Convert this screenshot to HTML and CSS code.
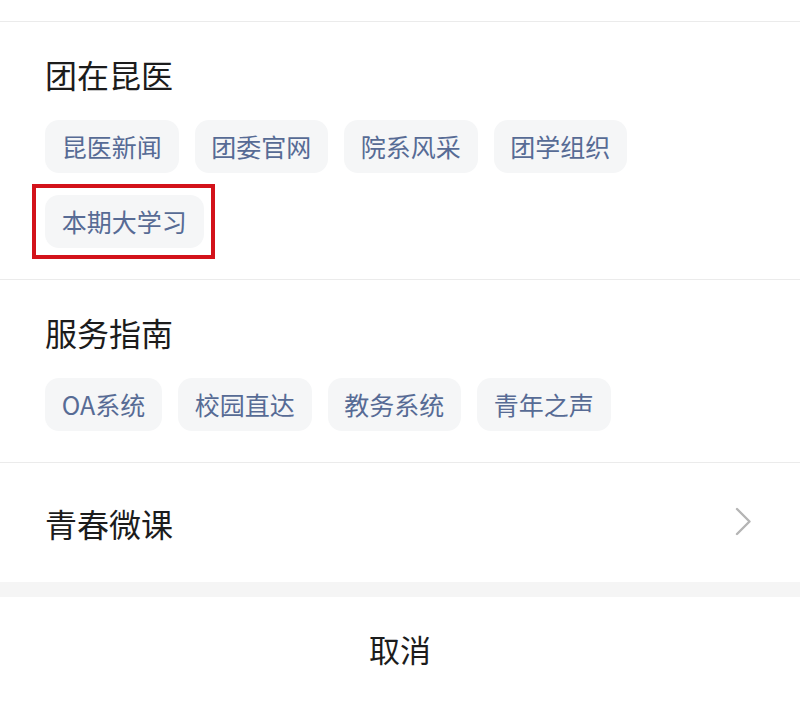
FILE: index.html
```html
<!DOCTYPE html>
<html lang="zh-CN">
<head>
<meta charset="utf-8">
<title>菜单</title>
<link rel="stylesheet" href="styles.css">
</head>
<body>
<div class="sheet">
  <div class="top-gap"></div>
  <section class="group">
    <h2 class="group-title">团在昆医</h2>
    <div class="tags">
      <span class="tag">昆医新闻</span>
      <span class="tag">团委官网</span>
      <span class="tag">院系风采</span>
      <span class="tag">团学组织</span>
      <span class="tag tag-marked">本期大学习</span>
    </div>
  </section>
  <section class="group">
    <h2 class="group-title">服务指南</h2>
    <div class="tags">
      <span class="tag">OA系统</span>
      <span class="tag">校园直达</span>
      <span class="tag">教务系统</span>
      <span class="tag">青年之声</span>
    </div>
  </section>
  <div class="link-row">
    <span class="group-title">青春微课</span>
    <svg class="chevron" width="17" height="29" viewBox="0 0 17 29" aria-hidden="true">
      <polyline points="2,2 14.5,14.5 2,27" fill="none" stroke="#b5b5b5" stroke-width="2.4" stroke-linecap="round" stroke-linejoin="round"/>
    </svg>
  </div>
  <div class="band"></div>
  <div class="cancel">取消</div>
</div>
</body>
</html>
```

FILE: styles.css
```css
* {
  box-sizing: border-box;
}

html, body {
  margin: 0;
  padding: 0;
  background: #ffffff;
}

body {
  font-family: "Noto Sans CJK SC", "Noto Sans", sans-serif;
  color: #1c1c1c;
}

.sheet {
  width: 800px;
  display: flex;
  flex-direction: column;
}

.top-gap {
  height: 21px;
}

.group {
  border-top: 1px solid #ebebeb;
  padding: 32px 45px 31px;
}

.group-title {
  margin: 0;
  font-size: 32px;
  font-weight: 400;
  line-height: 40px;
  color: #1c1c1c;
}

.tags {
  margin-top: 26px;
  display: flex;
  flex-wrap: wrap;
  column-gap: 16px;
  row-gap: 22px;
}

.tag {
  position: relative;
  display: inline-block;
  height: 53px;
  line-height: 53px;
  padding: 0 16.75px;
  font-size: 25px;
  color: #576b95;
  background: #f5f6f7;
  border-radius: 14px;
  white-space: nowrap;
}

.tag-marked::after {
  content: "";
  position: absolute;
  left: -13px;
  right: -11px;
  top: -11px;
  bottom: -11px;
  border: 4px solid #d3121a;
  pointer-events: none;
}

.link-row {
  border-top: 1px solid #ebebeb;
  height: 120px;
  padding: 0 48px 0 45px;
  display: flex;
  align-items: center;
  justify-content: space-between;
}

.chevron {
  display: block;
  margin-top: -3px;
}

.band {
  height: 15px;
  background: #f5f5f5;
}

.cancel {
  padding: 32px 0;
  text-align: center;
  font-size: 31px;
  line-height: 40px;
  color: #1c1c1c;
}
```
